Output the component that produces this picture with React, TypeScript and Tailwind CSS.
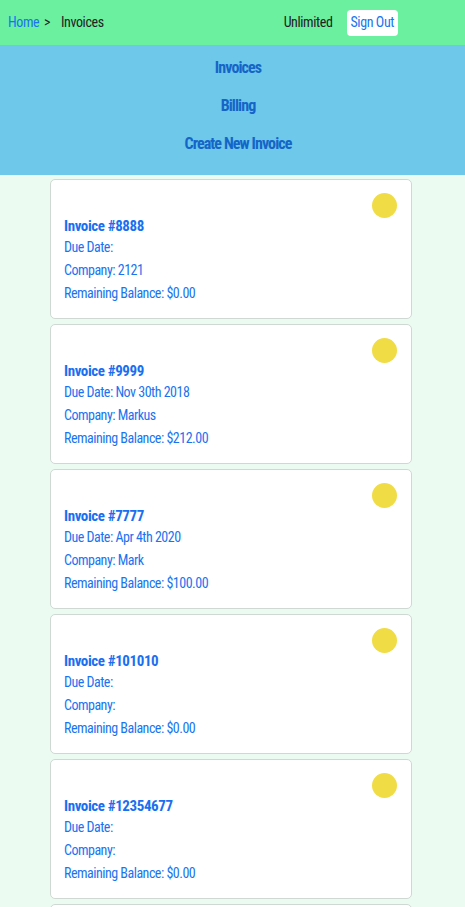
import React from "react";

interface Invoice {
  number: string;
  dueDate: string;
  company: string;
  balance: string;
}

const invoices: Invoice[] = [
  { number: "8888", dueDate: "", company: "2121", balance: "$0.00" },
  { number: "9999", dueDate: "Nov 30th 2018", company: "Markus", balance: "$212.00" },
  { number: "7777", dueDate: "Apr 4th 2020", company: "Mark", balance: "$100.00" },
  { number: "101010", dueDate: "", company: "", balance: "$0.00" },
  { number: "12354677", dueDate: "", company: "", balance: "$0.00" },
  { number: "5555", dueDate: "", company: "", balance: "$0.00" },
];

function InvoiceCard({ invoice }: { invoice: Invoice }) {
  return (
    <div className="w-[362px] h-[140px] shrink-0 bg-white border border-[#cfd8d3] rounded-[5px] px-[13px] pt-[13px]">
      <div className="flex justify-end">
        <span className="h-[25px] w-[25px] rounded-full bg-[#f0dc44] mr-px" />
      </div>
      <h3 className="text-[15px] leading-[16px] font-bold text-[#1a6ff0] tracking-[-0.4px]">
        Invoice #{invoice.number}
      </h3>
      <div className="flex flex-col text-[14px] text-[#1a73f0] leading-[23px] mt-[2px] tracking-[-0.5px]">
        <span>Due Date: {invoice.dueDate}</span>
        <span>Company: {invoice.company}</span>
        <span>Remaining Balance: {invoice.balance}</span>
      </div>
    </div>
  );
}

export default function App() {
  return (
    <div className="min-h-screen bg-[#ebfbf2] pb-[20px] font-['Roboto_Condensed',sans-serif]">
      {/* Top bar */}
      <div className="h-[45px] bg-[#6af09f] flex items-center pl-[8px] text-[14px] tracking-[-0.4px]">
        <a href="#" className="text-[#1a73f0] w-[36px]">Home</a>
        <span className="text-[#222] w-[17px]">&gt;</span>
        <span className="text-[#222]">Invoices</span>
        <span className="ml-auto text-[#222]">Unlimited</span>
        <button className="ml-[14px] mr-[67px] h-[26px] px-[4px] bg-white rounded-[4px] text-[#1a73f0] text-[14px] tracking-[-0.4px]">
          Sign Out
        </button>
      </div>

      {/* Nav */}
      <nav className="h-[130px] bg-[#6dc8ea] flex flex-col items-center pt-[13px] pl-[11px] gap-[18px] text-[16px] font-bold text-[#1565c8] leading-[20px] tracking-[-0.9px]">
        <a href="#">Invoices</a>
        <a href="#">Billing</a>
        <a href="#">Create New Invoice</a>
      </nav>

      {/* Invoice list */}
      <div className="flex flex-col gap-[5px] pt-[4px] pl-[50px]">
        {invoices.map((inv) => (
          <InvoiceCard key={inv.number} invoice={inv} />
        ))}
      </div>
    </div>
  );
}
